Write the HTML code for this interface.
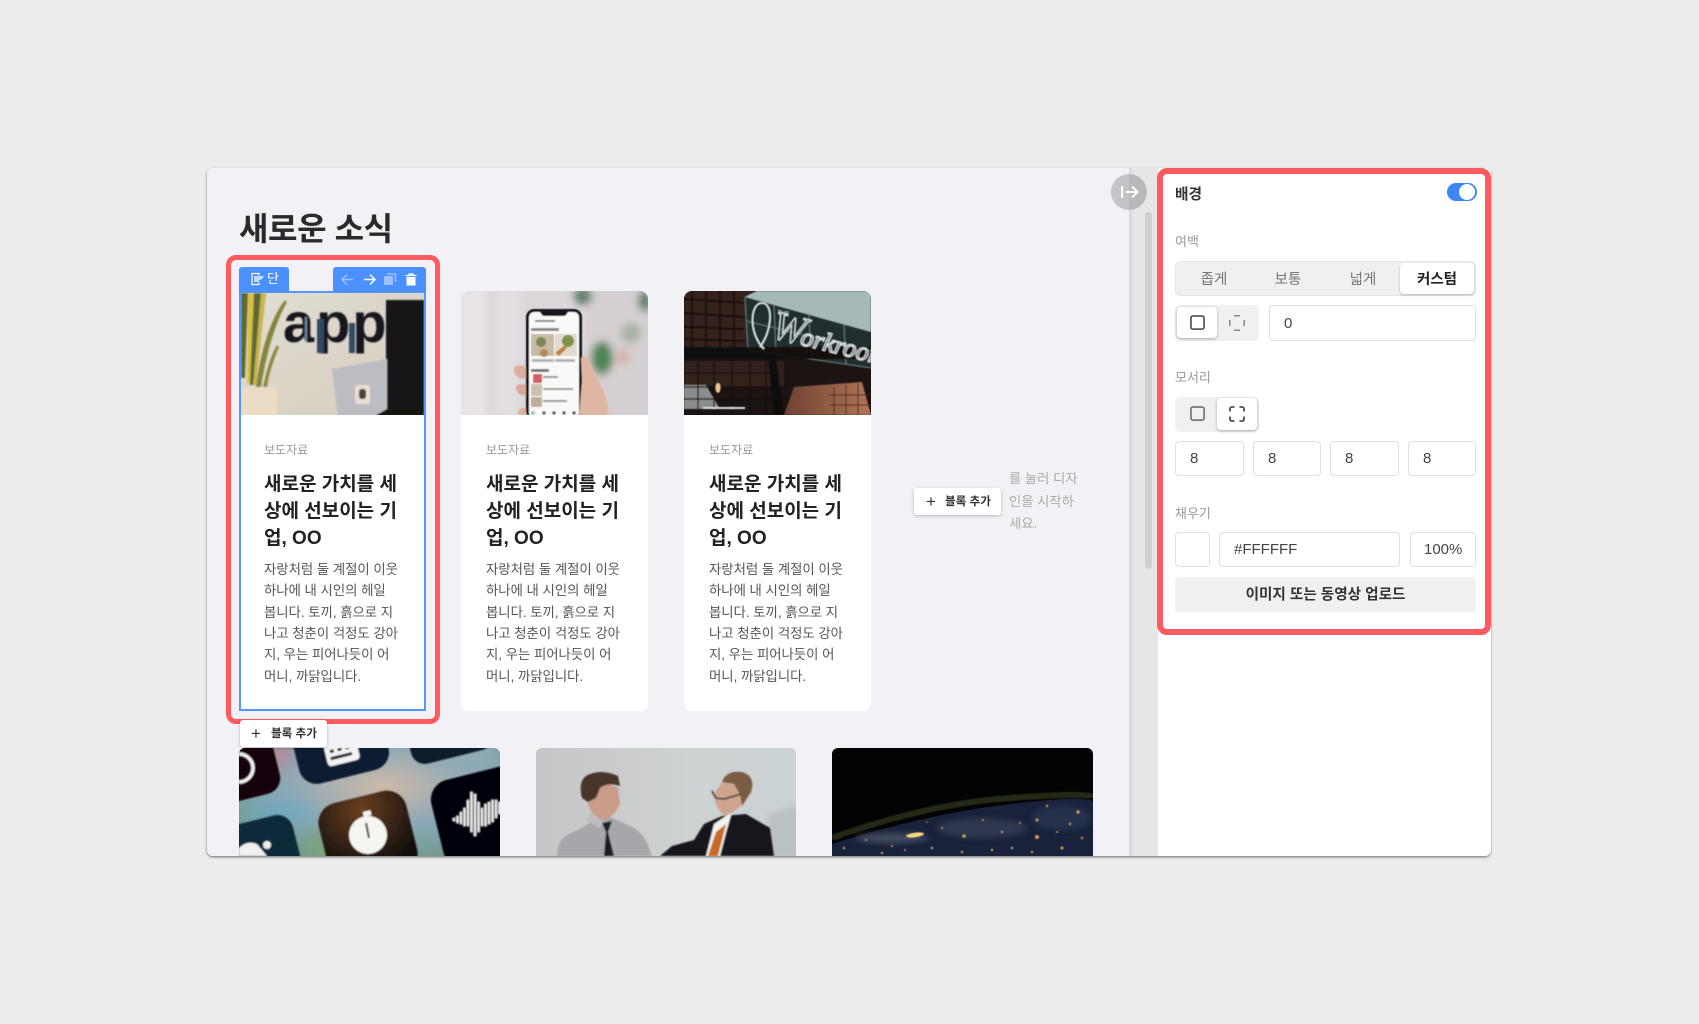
<!DOCTYPE html>
<html lang="ko">
<head>
<meta charset="utf-8">
<title>새로운 소식</title>
<style>
html,body{margin:0;padding:0;width:1699px;height:1024px;overflow:hidden;background:#ececec}
body{font-family:"Liberation Sans","Noto Sans CJK KR",sans-serif;position:relative;color:#222;filter:blur(.35px)}
div,svg,span{position:absolute;box-sizing:border-box}
.nw{white-space:nowrap}
.card{background:#fff;border-radius:8px;width:187px;height:420px;top:291px;overflow:hidden}
.card svg{left:0;top:0}
.lab{left:25px;top:150px;font-size:12px;line-height:18px;color:#999;white-space:nowrap}
.hd{left:25px;top:180px;font-size:19px;line-height:27.1px;font-weight:700;color:#222;white-space:nowrap}
.bd{left:25px;top:268.200px;font-size:13.4px;line-height:21.3px;color:#555;white-space:nowrap;letter-spacing:-.03px}
.f{font-size:13px;color:#999;line-height:18px;white-space:nowrap}
.inp{background:#fff;border:1.5px solid #e0e0e0;border-radius:4px;font-size:15px;color:#444;line-height:34px;white-space:nowrap}
.seg{font-size:14.5px;color:#777;line-height:20px;white-space:nowrap;transform:translateX(-50%)}
.add{background:#fff;border-radius:3px;box-shadow:0 1px 3px rgba(0,0,0,.25);font-size:11.6px;font-weight:700;color:#333;white-space:nowrap}
</style>
</head>
<body>
<!-- main panel -->
<div style="left:207px;top:168px;width:1284px;height:688px;background:#fff;border-radius:6px;box-shadow:0 1.500px 2px rgba(0,0,0,.4),-1px 0 2px rgba(0,0,0,.1)"></div>
<div style="left:207px;top:168px;width:923px;height:688px;background:#f2f1f6;border-radius:6px 0 0 6px"></div>
<div style="left:1129px;top:168px;width:29px;height:688px;background:linear-gradient(90deg,#d6d6d6,#e6e6e6 18%,#e6e6e6)"></div>
<div style="left:1145px;top:212px;width:7px;height:357px;background:#cfcfcf;border-radius:4px"></div>
<div style="left:1111px;top:174px;width:36px;height:36px;border-radius:50%;background:linear-gradient(90deg,#c5c4c9 50%,#b8b8b8 50%)"></div>
<svg style="left:1111px;top:174px" width="36" height="36" viewBox="0 0 36 36" fill="none" stroke="#fff" stroke-width="2"><path d="M11 12v12M15 18h11M21 12.500l5.500 5.500-5.500 5.500"/></svg>

<div class="nw" style="left:239px;top:207px;font-size:32px;line-height:44px;font-weight:700;color:#2a2a2a;letter-spacing:-.4px">새로운 소식</div>

<!-- card 1 -->
<div class="card" style="left:239px;border-radius:0;background:#fff">
  <svg width="187" height="124" viewBox="0 0 187 124" style="left:2px;top:2px">
    <defs>
      <filter id="b1" x="-10%" y="-10%" width="120%" height="120%"><feGaussianBlur stdDeviation=".9"/></filter>
      <linearGradient id="w" x1="0" y1="0" x2="1" y2="1"><stop offset="0" stop-color="#e3ded3"/><stop offset="1" stop-color="#d3ccbe"/></linearGradient>
      <clipPath id="c1"><rect width="183" height="122"/></clipPath>
    </defs>
    <g clip-path="url(#c1)">
      <rect width="183" height="122" fill="url(#w)"/>
      <g filter="url(#b1)">
        <rect x="145" y="7" width="38" height="108" fill="#131315"/>
        <rect x="135" y="114" width="48" height="10" fill="#15120f"/>
        <path d="M91 76L146 66V116L132 124H97Z" fill="#bcbdc3"/>
        <rect x="114" y="92" width="15" height="19" rx="3" fill="#e8dfd2"/>
        <rect x="118" y="96" width="7" height="10" rx="2.500" fill="#4a3f3a"/>
        <rect x="0" y="94" width="36" height="30" fill="#ecdcc6"/>
        <path d="M0 0h7L4 85H0Z" fill="#5f6a2f"/>
        <path d="M7 0h6l-3 90H6Z" fill="#d9bf4a"/>
        <path d="M13 0h7L13 92H9Z" fill="#5f6a30"/>
        <path d="M20 0h5L15 92h-3Z" fill="#c9b44d"/>
        <path d="M15 94C18 70 26 30 44 7L46 9C32 34 24 68 20 94Z" fill="#85863a"/>
        <path d="M22 94C26 76 30 62 36 52L38 54C33 66 28 80 26 94Z" fill="#8b8a3e"/>
        <text x="42" y="49" font-family="Liberation Sans" font-weight="700" font-size="56" fill="#14161c" letter-spacing="2">app</text>
        <rect x="64" y="24" width="2" height="24" fill="#6f8ea3"/>
        <rect x="76" y="26" width="7" height="34" fill="#2d4860"/>
        <rect x="108" y="30" width="6" height="30" fill="#2f4d66"/>
      </g>
    </g>
  </svg>
  <div class="lab">보도자료</div>
  <div class="hd">새로운 가치를 세<br>상에 선보이는 기<br>업, OO</div>
  <div class="bd">자랑처럼 둘 계절이 이웃<br>하나에 내 시인의 헤일<br>봅니다. 토끼, 흙으로 지<br>나고 청춘이 걱정도 강아<br>지, 우는 피어나듯이 어<br>머니, 까닭입니다.</div>
</div>
<div style="left:239px;top:291px;width:187px;height:420px;border:2px solid #5596ff"></div>
<!-- toolbar -->
<div style="left:239px;top:267px;width:50px;height:25px;background:#4a90ff;border-radius:3px 3px 0 0"></div>
<div style="left:333px;top:267px;width:93px;height:25px;background:#4a90ff;border-radius:3px 3px 0 0"></div>
<svg style="left:250px;top:272px" width="14" height="14" viewBox="0 0 14 14" fill="none" stroke="#fff" stroke-width="1.200"><path d="M9 3.500V1.500H2V12.500H9V10.500M4 5h8.500L10.500 7h-6.500M4 9h5"/></svg>
<div class="nw" style="left:267px;top:270px;font-size:13px;line-height:18px;color:#fff">단</div>
<svg style="left:339px;top:271px" width="84" height="17" viewBox="0 0 84 17" fill="none" stroke="#fff" stroke-width="1.500">
  <path opacity=".45" d="M14 8.500H3M8 3.500L3 8.500L8 13.500"/>
  <path d="M25 8.500H36M31 3.500L36 8.500L31 13.500"/>
  <g opacity=".45"><rect x="45" y="5" width="9" height="9" rx="1" fill="#fff" stroke="none"/><path d="M48 3h8.500v8"/></g>
  <path d="M66.500 4.500h11M70 4.500V3h4v1.500" stroke-width="1.300"/><path d="M67.500 6h9v8.500h-9z" fill="#fff" stroke="none"/>
</svg>
<!-- red highlight 1 -->
<div style="left:226px;top:255px;width:214px;height:469px;border:5.500px solid #ff5a5f;border-radius:10px"></div>

<!-- card 2 -->
<div class="card" style="left:461px">
  <svg width="187" height="124" viewBox="0 0 187 124">
    <defs>
      <filter id="b3" x="-20%" y="-20%" width="140%" height="140%"><feGaussianBlur stdDeviation="4"/></filter>
      <filter id="b4"><feGaussianBlur stdDeviation=".6"/></filter>
      <clipPath id="c2"><rect width="187" height="124"/></clipPath>
    </defs>
    <g clip-path="url(#c2)">
    <rect width="187" height="124" fill="#dcd7da"/>
    <g filter="url(#b3)">
      <rect x="-5" y="-5" width="30" height="134" fill="#e9e5e6"/>
      <rect x="35" y="-5" width="24" height="134" fill="#e3dee0"/>
      <rect x="125" y="-5" width="70" height="134" fill="#d5cfd1"/>
      <ellipse cx="122" cy="5" rx="9" ry="9" fill="#5f7f66"/>
      <ellipse cx="184" cy="10" rx="7" ry="11" fill="#5f8066"/>
      <ellipse cx="141" cy="67" rx="11" ry="17" fill="#4f8454"/>
      <ellipse cx="170" cy="42" rx="10" ry="10" fill="#a4b2a3"/>
      <ellipse cx="162" cy="66" rx="6" ry="7" fill="#d5aba3"/>
    </g>
    <g filter="url(#b4)">
      <path d="M53 79Q53 74 58 74L66 76V88L58 87Q53 84 53 79Z" fill="#dcb09c"/>
      <path d="M55 97Q55 93 60 93L66 94V105L60 104Q55 101 55 97Z" fill="#d8ab97"/>
      <path d="M57 124Q57 117 62 117L66 117V124Z" fill="#dcb09c"/>
      <rect x="65" y="18" width="56" height="110" rx="8" fill="#14181a"/>
      <rect x="68" y="21" width="50" height="106" rx="5" fill="#f9f9f8"/>
      <path d="M79 21h28l-2 3q-1 1-3 1H84q-2 0-3-1Z" fill="#14181a"/>
      <rect x="74" y="29" width="20" height="2" fill="#888"/>
      <rect x="70" y="37" width="28" height="3" fill="#888"/>
      <rect x="70" y="43" width="23" height="22" fill="#c8bba5"/>
      <circle cx="80" cy="51" r="5" fill="#7a8756"/><circle cx="83" cy="62" r="4" fill="#b68a5c"/>
      <rect x="94" y="43" width="22" height="22" fill="#e0dcd2"/>
      <circle cx="107" cy="50" r="6" fill="#7f9348"/><path d="M94 62L104 54L106 57L98 65Z" fill="#c4823f"/>
      <rect x="71" y="68" width="22" height="3" fill="#b5b5b5"/><rect x="94" y="68" width="20" height="3" fill="#b5b5b5"/>
      <rect x="70" y="78" width="18" height="3" fill="#777"/>
      <rect x="72" y="83" width="9" height="9" fill="#d06060"/><rect x="70" y="93" width="11" height="12" fill="#cbbfae"/><rect x="70" y="106" width="11" height="10" fill="#bdae98"/>
      <rect x="82" y="85" width="15" height="2" fill="#999"/><rect x="82" y="97" width="30" height="2" fill="#999"/><rect x="82" y="109" width="24" height="2" fill="#999"/>
      <g fill="#555"><circle cx="83" cy="122" r="1.700"/><circle cx="93" cy="122" r="1.700"/><circle cx="103" cy="122" r="1.700"/><circle cx="113" cy="122" r="1.700"/></g>
      <circle cx="72" cy="122" r="2" fill="#8cc"/>
      <path d="M120 67Q126 62 131 76L142 100Q148 112 147 125H118L121 90Z" fill="#dfb6a3"/>
    </g>
    </g>
  </svg>
  <div class="lab">보도자료</div>
  <div class="hd">새로운 가치를 세<br>상에 선보이는 기<br>업, OO</div>
  <div class="bd">자랑처럼 둘 계절이 이웃<br>하나에 내 시인의 헤일<br>봅니다. 토끼, 흙으로 지<br>나고 청춘이 걱정도 강아<br>지, 우는 피어나듯이 어<br>머니, 까닭입니다.</div>
</div>

<!-- card 3 -->
<div class="card" style="left:684px">
  <svg width="187" height="124" viewBox="0 0 187 124">
    <defs>
      <filter id="b5"><feGaussianBlur stdDeviation=".6"/></filter>
      <linearGradient id="or" x1="0" x2="1"><stop offset="0" stop-color="#6e4232"/><stop offset="1" stop-color="#b27556"/></linearGradient>
    </defs>
    <rect width="187" height="124" fill="#1b1413"/>
    <g filter="url(#b5)">
      <rect width="73" height="56" fill="#35211b"/>
      <path d="M73 0H187V41L61 6Z" fill="#a5bab7"/>
      <path d="M61 6L187 41V77L64 59Z" fill="#232d2f"/>
      <path d="M61 6L64 59M187 77L64 59M90 14L92 63M125 24L127 68M160 34L162 73M62 30L187 60" stroke="#5f7b7a" stroke-width="1" fill="none"/>
      <path d="M0 8L60 12M0 22L60 26M0 36L60 38M0 48L62 50M8 0V60M22 0V60M36 0V60M50 0V60" stroke="#160e0c" stroke-width="1.700"/>
      <rect x="0" y="56" width="187" height="12" fill="#110d0c" opacity=".9"/>
      <path d="M100 124L110 96L178 91L187 124Z" fill="url(#or)"/>
      <path d="M0 70H100V96H0Z" fill="#33201a"/>
      <path d="M0 94H22L36 118H0Z" fill="#8a8c8e"/>
      <path d="M0 82H95M0 96H105M0 108H100M14 70V124M30 70V124M48 70V124M66 70V124M82 70V124" stroke="#120c0b" stroke-width="1.200"/>
      <path d="M92 68L100 124H90L84 68Z" fill="#0d0a0a"/>
      <path d="M150 96v28M162 94v30M174 92v32M145 104H186M146 114H186" stroke="#37201a" stroke-width="1"/>
      <ellipse cx="34" cy="97" rx="2.500" ry="5" fill="#f0c690"/>
      <rect x="19" y="116" width="42" height="2" fill="#ddd"/>
      <path d="M80 58C64 42 66 12 78 12C90 12 88 40 76 56" fill="none" stroke="#dfe8ea" stroke-width="1.600"/>
      <text x="86" y="46" transform="rotate(14 86 46)" font-family="Liberation Serif" font-style="italic" fill="none" stroke="#dfe8ea" stroke-width="1.100"><tspan font-size="40">W</tspan><tspan font-size="26" dx="-3">orkroom</tspan></text>
      <text x="93" y="23" font-family="Liberation Sans" font-size="6" fill="#dfe8ea" transform="rotate(10 93 23)">THE</text>
    </g>
  </svg>
  <div class="lab">보도자료</div>
  <div class="hd">새로운 가치를 세<br>상에 선보이는 기<br>업, OO</div>
  <div class="bd">자랑처럼 둘 계절이 이웃<br>하나에 내 시인의 헤일<br>봅니다. 토끼, 흙으로 지<br>나고 청춘이 걱정도 강아<br>지, 우는 피어나듯이 어<br>머니, 까닭입니다.</div>
</div>

<!-- add block right -->
<div class="add" style="left:914px;top:488px;width:87px;height:27px;line-height:27px;color:#333"><span style="left:12px;top:0;font-weight:400;font-size:17px">+</span><span style="left:31px;top:0">블록 추가</span></div>
<div class="nw" style="left:1009px;top:468px;font-size:13.3px;line-height:22.500px;color:#aaa">를 눌러 디자<br>인을 시작하<br>세요.</div>

<!-- bottom images -->
<svg style="left:239px;top:748px;border-radius:6px 6px 0 0" width="261" height="108" viewBox="0 0 261 108">
  <defs>
    <radialGradient id="ga" cx=".55" cy=".35" r=".7"><stop offset="0" stop-color="#cdb9aa"/><stop offset=".55" stop-color="#8aa8b6"/><stop offset="1" stop-color="#6f9a8c"/></radialGradient>
    <radialGradient id="gt" cx=".5" cy=".15" r=".7"><stop offset="0" stop-color="#6a3f20"/><stop offset="1" stop-color="#14100e"/></radialGradient>
    <clipPath id="ca"><rect width="261" height="108"/></clipPath>
    <filter id="b6"><feGaussianBlur stdDeviation=".7"/></filter>
    <filter id="b6b" x="-50%" y="-50%" width="200%" height="200%"><feGaussianBlur stdDeviation="8"/></filter>
  </defs>
  <g clip-path="url(#ca)">
  <rect width="261" height="108" fill="url(#ga)"/>
  <g filter="url(#b6b)">
    <ellipse cx="35" cy="5" rx="20" ry="20" fill="#c3859b" opacity=".7"/>
    <ellipse cx="40" cy="65" rx="34" ry="12" fill="#6aa9c4" opacity=".7"/>
    <ellipse cx="85" cy="100" rx="18" ry="18" fill="#7fa37e"/>
    <ellipse cx="220" cy="6" rx="40" ry="12" fill="#92acb8"/>
  </g>
  <g filter="url(#b6)">
    <rect x="-45" y="-20" width="83" height="72" rx="16" fill="#15060a" transform="rotate(-14 0 20)"/>
    <rect x="-24" y="72" width="82" height="70" rx="16" fill="#0f2b3a" transform="rotate(-14 20 100)"/>
    <rect x="56" y="-40" width="92" height="70" rx="18" fill="#0e1f30" transform="rotate(-14 100 0)"/>
    <rect x="172" y="-34" width="84" height="44" rx="14" fill="#0c1c2a" transform="rotate(-14 210 0)"/>
    <rect x="84" y="48" width="90" height="84" rx="20" fill="url(#gt)" transform="rotate(-14 129 90)"/>
    <rect x="196" y="25" width="100" height="90" rx="20" fill="#02040a" transform="rotate(-14 240 65)"/>
    <circle cx="129" cy="87" r="19" fill="#f5f6f0"/>
    <rect x="124" y="63" width="8" height="5" fill="#f5f6f0" transform="rotate(-14 128 65)"/>
    <path d="M127 75L130 90" stroke="#3a2a20" stroke-width="2"/>
    <rect x="86" y="-6" width="33" height="22" rx="4" fill="#f3f3ef" transform="rotate(-14 100 3)"/>
    <g fill="#0e1f30" transform="rotate(-14 100 3)"><rect x="91" y="0" width="4" height="3"/><rect x="99" y="0" width="4" height="3"/><rect x="107" y="0" width="4" height="3"/><rect x="90" y="7" width="22" height="3"/></g>
    <path d="M0 6A14 14 0 0 1 0 34" fill="none" stroke="#f0f0ee" stroke-width="3.500"/>
    <path d="M0 108V100Q8 92 18 96L28 108Z" fill="#f0f0ee"/><circle cx="28" cy="97" r="4" fill="#f0f0ee"/>
    <g stroke="#f4f4f4" stroke-width="2.300"><path d="M215 70v3M218.500 68v7M222 64v12M225.500 60v18M229 52v26M232.500 44v40M236 46v42M239.500 54v30M243 60v18M246.500 56v22M250 54v22M253.500 52v22M257 52v18M260.500 54v12"/></g>
  </g>
  </g>
</svg>
<svg style="left:536px;top:748px;border-radius:6px 6px 0 0" width="260" height="108" viewBox="0 0 260 108">
  <defs>
    <linearGradient id="gb" x1="0" x2="1"><stop offset="0" stop-color="#c6c6c6"/><stop offset=".6" stop-color="#ced2d3"/><stop offset="1" stop-color="#cad2d3"/></linearGradient>
    <clipPath id="cb"><rect width="260" height="108"/></clipPath>
    <filter id="b7" x="-10%" y="-10%" width="120%" height="120%"><feGaussianBlur stdDeviation=".7"/></filter>
    <filter id="b7b" x="-30%" y="-30%" width="160%" height="160%"><feGaussianBlur stdDeviation="3"/></filter>
  </defs>
  <g clip-path="url(#cb)">
  <rect width="260" height="108" fill="url(#gb)"/>
  <path d="M232 66L265 56V112H232Z" fill="#bbc1c3" filter="url(#b7b)"/>
  <g filter="url(#b7)">
    <path d="M21 108L23 96Q26 88 42 82L58 72L72 68L94 78Q108 84 113 100L116 108Z" fill="#a6a7ab"/>
    <path d="M56 62L68 70L64 80L50 72Z" fill="#bebec1"/>
    <path d="M66 75L76 73L72 84L78 108H68L70 84Z" fill="#1d1e22"/>
    <path d="M50 46Q52 66 66 72Q78 70 84 56L82 40L62 32L50 38Z" fill="#c99d87"/>
    <path d="M46 50Q42 34 50 28Q64 20 82 28L84 38Q72 34 64 40L60 50L52 54Z" fill="#47352a"/>
    <path d="M124 108L136 98L158 92L168 76L186 68L210 66L234 80L238 108Z" fill="#18181b"/>
    <path d="M178 76L196 64L190 85L184 108H170Z" fill="#f2f1ef"/>
    <path d="M180 84L190 76L186 92L182 108H172Z" fill="#c8682c"/>
    <path d="M178 46Q180 64 190 68Q202 62 208 54L204 38L186 34Z" fill="#cfa48d"/>
    <path d="M186 34Q190 22 206 24Q220 28 215 44L206 58L204 46L198 36Z" fill="#7a5b42"/>
    <path d="M176 43L180 50L188 51L205 46" stroke="#2a2a2e" stroke-width="1.600" fill="none"/>
  </g>
  </g>
</svg>
<svg style="left:832px;top:748px;border-radius:6px 6px 0 0" width="261" height="108" viewBox="0 0 261 108">
  <defs><filter id="b8"><feGaussianBlur stdDeviation=".5"/></filter><filter id="b9" x="-20%" y="-50%" width="140%" height="200%"><feGaussianBlur stdDeviation="3"/></filter></defs>
  <rect width="261" height="108" fill="#030304"/>
  <path d="M0 90Q94 56 178 50T261 50" stroke="#232a14" stroke-width="6" fill="none" filter="url(#b8)"/>
  <path d="M0 96Q94 66 178 56T261 55V108H0Z" fill="#18223a"/>
  <g filter="url(#b9)"><ellipse cx="60" cy="90" rx="36" ry="5" fill="#535d70" opacity=".7"/><ellipse cx="150" cy="80" rx="45" ry="10" fill="#2e394f"/><ellipse cx="230" cy="70" rx="30" ry="12" fill="#28334b"/></g>
  <g filter="url(#b8)" fill="#d49c4c">
    <ellipse cx="83" cy="87" rx="9" ry="2.300" fill="#f7d77c" transform="rotate(-8 83 87)"/>
    <circle cx="34" cy="92" r="1"/><circle cx="12" cy="100" r="1.200"/><circle cx="50" cy="105" r="1.200"/><circle cx="73" cy="102" r="1"/><circle cx="100" cy="100" r="1.200"/>
    <circle cx="132" cy="88" r="1.800"/><circle cx="110" cy="80" r="1"/><circle cx="151" cy="72" r="1"/><circle cx="205" cy="72" r="1.500"/><circle cx="205" cy="89" r="2"/><circle cx="246" cy="64" r="1.700"/>
    <circle cx="215" cy="58" r="1.200"/><circle cx="160" cy="102" r="1.200"/><circle cx="188" cy="75" r="1"/><circle cx="230" cy="100" r="1.500"/><circle cx="130" cy="104" r="1.200"/><circle cx="180" cy="100" r="1.200"/><circle cx="250" cy="90" r="1.200"/><circle cx="225" cy="84" r="1"/><circle cx="95" cy="74" r=".8"/><circle cx="170" cy="84" r="1.200"/><circle cx="60" cy="98" r="1"/><circle cx="200" cy="104" r="1.200"/><circle cx="238" cy="76" r="1.200"/>
  </g>
</svg>

<!-- add block bottom -->
<div class="add" style="left:240px;top:720px;width:87px;height:27px;line-height:27px"><span style="left:11px;top:0;font-weight:400;font-size:17px">+</span><span style="left:31px;top:0">블록 추가</span></div>

<!-- right panel -->
<div class="nw" style="left:1175px;top:185px;font-size:14.7px;line-height:20px;font-weight:700;color:#333">배경</div>
<div style="left:1447px;top:183px;width:30px;height:18px;border-radius:9px;background:#3d85f4"></div>
<div style="left:1459px;top:184px;width:16px;height:16px;border-radius:50%;background:#fff"></div>

<div class="f" style="left:1175px;top:233px">여백</div>
<div style="left:1175px;top:261px;width:301px;height:35px;background:#f0f0f0;border-radius:6px;box-shadow:inset 0 0 0 1px #e6e6e6"></div>
<div style="left:1400px;top:263px;width:74px;height:31px;background:#fff;border-radius:4px;box-shadow:0 1px 2px rgba(0,0,0,.25)"></div>
<div class="seg" style="left:1214px;top:269.500px">좁게</div>
<div class="seg" style="left:1288px;top:269.500px">보통</div>
<div class="seg" style="left:1363px;top:269.500px">넓게</div>
<div class="seg" style="left:1437px;top:269.500px;color:#222;font-weight:700">커스텀</div>

<div style="left:1175px;top:305px;width:84px;height:36px;background:#f0f0f0;border-radius:6px"></div>
<div style="left:1177px;top:307px;width:40px;height:31px;background:#fff;border-radius:4px;box-shadow:0 1px 3px rgba(0,0,0,.3)"></div>
<svg style="left:1190px;top:315px" width="15" height="15" viewBox="0 0 16 16" fill="none" stroke="#3f3f3f" stroke-width="1.600"><rect x="1" y="1" width="14" height="14" rx="2"/></svg>
<svg style="left:1229px;top:315px" width="16" height="16" viewBox="0 0 16 16" fill="none" stroke="#888" stroke-width="1.500"><path d="M5 .800h6M5 15.200h6M.800 5v6M15.200 5v6"/></svg>
<div class="inp" style="left:1269px;top:305px;width:207px;height:36px;padding-left:14px;line-height:35px">0</div>

<div class="f" style="left:1175px;top:369px">모서리</div>
<div style="left:1175px;top:397px;width:84px;height:35px;background:#f0f0f0;border-radius:6px"></div>
<div style="left:1217px;top:398px;width:40px;height:32px;background:#fff;border-radius:4px;box-shadow:0 1px 3px rgba(0,0,0,.3)"></div>
<svg style="left:1190px;top:406px" width="15" height="15" viewBox="0 0 16 16" fill="none" stroke="#666" stroke-width="1.600"><rect x="1" y="1" width="14" height="14" rx="2"/></svg>
<svg style="left:1229px;top:406px" width="16" height="16" viewBox="0 0 16 16" fill="none" stroke="#3a3a3a" stroke-width="1.600"><path d="M1 5.500V3Q1 1 3 1H5.500M10.500 1H13Q15 1 15 3V5.500M15 10.500V13Q15 15 13 15H10.500M5.500 15H3Q1 15 1 13V10.500"/></svg>
<div class="inp" style="left:1175px;top:441px;width:69px;height:35px;padding-left:14px">8</div>
<div class="inp" style="left:1253px;top:441px;width:68px;height:35px;padding-left:14px">8</div>
<div class="inp" style="left:1330px;top:441px;width:69px;height:35px;padding-left:14px">8</div>
<div class="inp" style="left:1408px;top:441px;width:68px;height:35px;padding-left:14px">8</div>

<div class="f" style="left:1175px;top:505px">채우기</div>
<div class="inp" style="left:1175px;top:532px;width:35px;height:35px"></div>
<div class="inp" style="left:1219px;top:532px;width:181px;height:35px;padding-left:14px">#FFFFFF</div>
<div class="inp" style="left:1410px;top:532px;width:66px;height:35px;padding-left:13px">100%</div>
<div class="nw" style="left:1175px;top:577px;width:301px;height:35px;background:#f0f0f0;border-radius:4px;text-align:center;line-height:37px;font-size:14.6px;font-weight:700;color:#333">이미지 또는 동영상 업로드</div>

<!-- red highlight 2 -->
<div style="left:1157px;top:168px;width:334px;height:467px;border:6px solid #ff5a5f;border-radius:10px"></div>
</body>
</html>
